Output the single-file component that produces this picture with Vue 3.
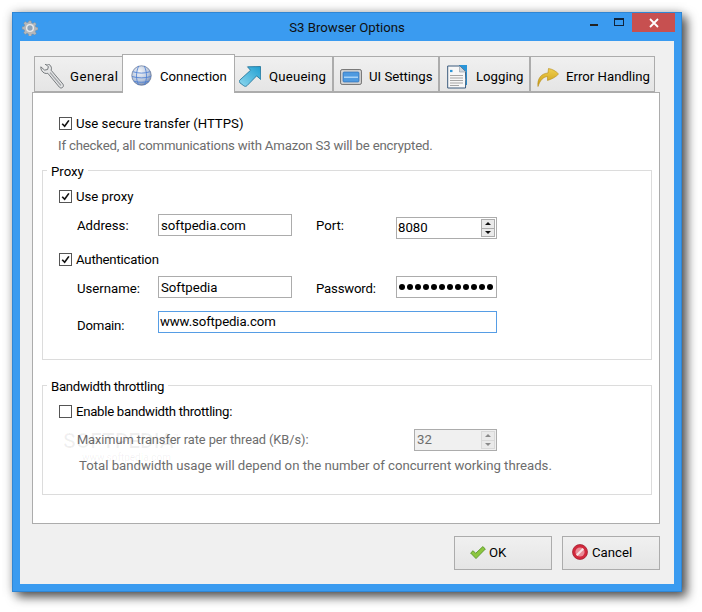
<script setup>
import { ref } from 'vue'

const tabs = [
  { id: 'general', label: 'General', width: 89, icon: 'wrench' },
  { id: 'connection', label: 'Connection', width: 113, icon: 'globe', active: true },
  { id: 'queueing', label: 'Queueing', width: 99, icon: 'arrow' },
  { id: 'ui', label: 'UI Settings', width: 106, icon: 'ui' },
  { id: 'logging', label: 'Logging', width: 91, icon: 'log' },
  { id: 'errors', label: 'Error Handling', width: 125, icon: 'curve' }
]
const secure = ref(true)
const proxy = ref(true)
const auth = ref(true)
const throttle = ref(false)
</script>

<template>
  <div class="screen">
    <div class="window">
      <header class="titlebar">
        <svg class="app-icon" viewBox="0 0 20 20">
          <path d="M8.500 .5h3l.5 2.600 1.700.7 2.200-1.400 2.100 2.100-1.400 2.200.7 1.700 2.600.5v3l-2.600.5-.7 1.700 1.400 2.200-2.100 2.100-2.200-1.400-1.700.7-.5 2.600h-3L8 16.900l-1.700-.7-2.200 1.400L2 15.500l1.400-2.200-.7-1.700L.1 11V8l2.600-.5.7-1.700L2 3.600 4.100 1.500l2.200 1.400L8 2.200z" transform="translate(0 .5)" fill="#b4b8bc" stroke="#7f868d" stroke-width=".5"/>
          <circle cx="10" cy="10" r="4.200" fill="#8fa3b8" stroke="#e8eaec" stroke-width="1.800"/>
        </svg>
        <div class="title">S3 Browser Options</div>
        <div class="controls">
          <span class="min"></span>
          <span class="max"></span>
          <span class="close">
            <svg viewBox="0 0 10 10" width="10" height="10"><path d="M1 1l8 8M9 1l-8 8" stroke="#fff" stroke-width="1.800"/></svg>
          </span>
        </div>
      </header>

      <main class="client">
        <nav class="tabstrip">
          <div
            v-for="t in tabs"
            :key="t.id"
            class="tab"
            :class="[{ active: t.active }, 'tab-' + t.id]"
            :style="{ width: t.width + 'px' }"
          >
            <svg v-if="t.icon === 'wrench'" class="ticon" viewBox="0 0 24 25">
              <path d="M.8 2.800l3.800 3.300 3-.6.800-2.900L5 0c2.800-.6 5.500.5 6.300 3.200.3 1.100.2 2.100-.2 3L22.800 20c.9 1.100.8 2.500-.2 3.400-1 .9-2.400.8-3.300-.3L7.800 9.300c-1 .3-2.100.3-3.100-.1C2.200 8.200.6 5.600.8 2.800z" fill="#e4e5e6" stroke="#6a6e72" stroke-width=".9"/>
              <path d="M10 8.500l11 13" stroke="#a4a7aa" stroke-width="1.200"/>
            </svg>
            <svg v-else-if="t.icon === 'globe'" class="ticon" viewBox="0 0 22 22">
              <defs>
                <radialGradient id="gl" cx=".4" cy=".3" r=".8">
                  <stop offset="0" stop-color="#f4f6f9"/><stop offset=".6" stop-color="#b8c6dc"/><stop offset="1" stop-color="#5f77a3"/>
                </radialGradient>
              </defs>
              <circle cx="11" cy="11" r="10.200" fill="url(#gl)" stroke="#5b6e8e" stroke-width=".7"/>
              <path d="M2 7c6 2 12 2 18 0M1 12c6 2 14 2 20 0M3 17c5 1.500 11 1.500 16 0M8 1C5 8 5 15 8 21M14 1c3 7 3 14 0 20" fill="none" stroke="#4d80d4" stroke-width=".9"/>
            </svg>
            <svg v-else-if="t.icon === 'arrow'" class="ticon" viewBox="0 0 22 21">
              <defs>
                <linearGradient id="ar" x1="0" y1="1" x2="1" y2="0">
                  <stop offset="0" stop-color="#8fd8ee"/><stop offset="1" stop-color="#1f9ed1"/>
                </linearGradient>
              </defs>
              <path d="M8.500 .8l13-.3.300 13-4.200-3.600-9.500 9.700c-1 1-2.200 1-3.400.1L1 16.900c-.9-1-.9-2.100 0-3L11.500 4.300z" fill="url(#ar)" stroke="#1a6f96" stroke-width=".8"/>
            </svg>
            <svg v-else-if="t.icon === 'ui'" class="ticon" viewBox="0 0 22 16">
              <rect x=".6" y=".6" width="20.800" height="14.800" rx="1.500" fill="#d8d8d8" stroke="#6e6e6e"/>
              <rect x="3" y="3" width="16" height="10" rx="1" fill="#4f9ae0" stroke="#2f6fb2" stroke-width=".7"/>
              <rect x="4" y="7.500" width="14" height="1.500" fill="#a7d2f6"/>
            </svg>
            <svg v-else-if="t.icon === 'log'" class="ticon" viewBox="0 0 20 24">
              <path d="M12 0h8v20h-3z" fill="#2a95d8"/>
              <path d="M.7 1h12l5.800 5.500c.4 5.600.4 11.200 0 16.500H.7z" fill="#f7f7f7" stroke="#3a5a7d"/>
              <path d="M12.500 1v6h6.300" fill="#cfd6dd" stroke="#8c99a6" stroke-width=".6"/>
              <path d="M3 6h2.500" stroke="#2a95d8" stroke-width="2.200"/>
              <path d="M3 10.500h13M3 13h13M3 15.500h13M3 18h13M3 20.500h9" stroke="#a5a5a5"/>
            </svg>
            <svg v-else class="ticon" viewBox="0 0 22 19">
              <defs>
                <linearGradient id="cv" x1="0" y1="0" x2="0" y2="1">
                  <stop offset="0" stop-color="#f0d050"/><stop offset="1" stop-color="#c99a10"/>
                </linearGradient>
              </defs>
              <path d="M1 18.500C0 11 4 5.500 11 5l.5-4.500C15 1 19 3 21.500 6c-2.500 3-6.500 5-11 6.500V8.500C6 9 3 12.500 1 18.500z" fill="url(#cv)" stroke="#b58a14" stroke-width=".6"/>
            </svg>
            <span class="tlabel">{{ t.label }}</span>
          </div>
        </nav>

        <section class="page">
          <label class="check first">
            <input v-model="secure" type="checkbox" class="native" />
            <span class="box"><svg v-if="secure" viewBox="0 0 13 13"><path d="M2.600 6.800l2.900 3 5-7" fill="none" stroke="#111" stroke-width="2"/></svg></span>
            Use secure transfer (HTTPS)
          </label>
          <p class="hint">If checked, all communications with Amazon S3 will be encrypted.</p>

          <div class="group proxy">
            <span class="legend">Proxy</span>
            <label class="check">
              <input v-model="proxy" type="checkbox" class="native" />
              <span class="box"><svg v-if="proxy" viewBox="0 0 13 13"><path d="M2.600 6.800l2.900 3 5-7" fill="none" stroke="#111" stroke-width="2"/></svg></span>
              Use proxy
            </label>
            <div class="row row-address">
              <span class="lbl">Address:</span>
              <div class="field w134">softpedia.com</div>
              <span class="lbl2">Port:</span>
              <div class="field w101 spin port">
                8080
                <span class="spinner"><i class="up"></i><i class="down"></i></span>
              </div>
            </div>
            <label class="check auth tight">
              <input v-model="auth" type="checkbox" class="native" />
              <span class="box"><svg v-if="auth" viewBox="0 0 13 13"><path d="M2.600 6.800l2.900 3 5-7" fill="none" stroke="#111" stroke-width="2"/></svg></span>
              Authentication
            </label>
            <div class="row row-user">
              <span class="lbl lower">Username:</span>
              <div class="field w134">Softpedia</div>
              <span class="lbl2 lower tight">Password:</span>
              <div class="field w101 dots"><i v-for="n in 12" :key="n"></i></div>
            </div>
            <div class="row row-domain">
              <span class="lbl lower3 tight">Domain:</span>
              <div class="field focus">www.softpedia.com</div>
            </div>
          </div>

          <div class="group band">
            <span class="legend tighter">Bandwidth throttling</span>
            <label class="check tighter">
              <input v-model="throttle" type="checkbox" class="native" />
              <span class="box"><svg v-if="throttle" viewBox="0 0 13 13"><path d="M2.600 6.800l2.900 3 5-7" fill="none" stroke="#111" stroke-width="2"/></svg></span>
              Enable bandwidth throttling:
            </label>
            <div class="row row-rate">
              <span class="lbl wide dim">Maximum transfer rate per thread (KB/s):</span>
              <div class="field w83 spin disabled">
                32
                <span class="spinner"><i class="up"></i><i class="down"></i></span>
              </div>
            </div>
            <p class="total dim">Total bandwidth usage will depend on the number of concurrent working threads.</p>
            <span class="mark">SOFTPEDIA<sup>™</sup></span>
            <span class="mark2">www.softpedia.com</span>
          </div>
        </section>

        <footer class="buttons">
          <button class="btn btn-ok" type="button">
            <svg viewBox="0 0 16 13" width="16" height="13"><path d="M.6 7l2.500-2.300 2.600 2.600L12.800.6 15.400 3 6 12.600z" fill="#8cc63f" stroke="#4f8f22" stroke-width=".8"/></svg>
            <span>OK</span>
          </button>
          <button class="btn btn-cancel" type="button">
            <svg viewBox="0 0 16 16" width="16" height="16"><circle cx="8" cy="8" r="7.500" fill="#d2283c" stroke="#9b1a2a" stroke-width=".7"/><circle cx="8" cy="8" r="4.600" fill="#e98c97"/><path d="M4.700 11.300l6.600-6.600" stroke="#f7e3e5" stroke-width="2"/></svg>
            <span>Cancel</span>
          </button>
        </footer>
      </main>
    </div>
  </div>
</template>

<style>
html, body { margin: 0; background: #fff; }
</style>

<style scoped>
.screen {
  box-sizing: border-box;
  width: 702px;
  height: 612px;
  padding: 12px 20px 20px 12px;
  overflow: hidden;
}
.window {
  box-sizing: border-box;
  width: 670px;
  height: 580px;
  background: #3a9bf0;
  border: 1px solid #2f86d4;
  padding: 0 7px 7px;
  display: flex;
  flex-direction: column;
  font: 13.2px Roboto, "Liberation Sans", sans-serif;
  color: #000;
  box-shadow: 5px 5px 10px rgba(0, 0, 0, .65), 0 0 10px rgba(0, 0, 0, .2);
}
.titlebar {
  height: 28px;
  flex: none;
  position: relative;
  display: flex;
  align-items: center;
  justify-content: center;
}
.app-icon { position: absolute; left: 2px; top: 7px; width: 16px; height: 16px; }
.title { color: #0f0f0f; }
.controls { position: absolute; right: 0; top: 0; }
.min { position: absolute; right: 76px; top: 11px; width: 8px; height: 2px; background: #222; }
.max { position: absolute; right: 50px; top: 5px; width: 8px; height: 5px; border: 1px solid #10233a; border-top-width: 2px; }
.close { position: absolute; right: -1px; top: 0; width: 43px; height: 19px; background: #c75050; display: flex; align-items: center; justify-content: center; }

.client {
  flex: 1;
  background: #f0f0f0;
  padding: 13px 14px 14px 12px;
  display: flex;
  flex-direction: column;
  min-height: 0;
}
.tabstrip { display: flex; align-items: flex-end; height: 38px; padding-left: 2px; flex: none; position: relative; z-index: 1; }
.tab {
  box-sizing: border-box;
  height: 36px;
  flex: none;
  border: 1px solid #acacac;
  background: linear-gradient(#f0f0f0, #e5e5e5);
  position: relative;
}
.tab.active { height: 39px; margin: 0 -1px -1px; background: #fff; border-bottom: 0; z-index: 2; }
.tlabel { position: absolute; top: 11px; white-space: nowrap; line-height: 18px; }
.ticon { position: absolute; display: block; }
.tab-general .ticon { left: 5px; top: 7px; width: 24px; height: 25px; }
.tab-general .tlabel { left: 35px; letter-spacing: .5px; }
.tab-connection .ticon { left: 8px; top: 10px; width: 21px; height: 21px; }
.tab-connection .tlabel { left: 37px; top: 13px; }
.tab-queueing .ticon { left: 4px; top: 9px; width: 22px; height: 21px; }
.tab-queueing .tlabel { left: 34px; letter-spacing: .2px; }
.tab-ui .ticon { left: 6px; top: 12px; width: 22px; height: 16px; }
.tab-ui .tlabel { left: 35px; }
.tab-logging .ticon { left: 7px; top: 8px; width: 20px; height: 24px; }
.tab-logging .tlabel { left: 36px; }
.tab-errors .ticon { left: 6px; top: 11px; width: 22px; height: 19px; }
.tab-errors .tlabel { left: 35px; }

.page {
  box-sizing: border-box;
  height: 432px;
  flex: none;
  background: #fff;
  border: 1px solid #acacac;
  padding: 0 7px 0 9px;
  position: relative;
}
.native { position: absolute; opacity: 0; width: 0; height: 0; margin: 0; }
.check { display: flex; align-items: center; height: 20px; gap: 4px; }
.check.first { margin: 20px 0 0 17px; }
.box {
  box-sizing: border-box;
  width: 13px;
  height: 13px;
  border: 1px solid #555;
  background: #fff;
  flex: none;
  display: block;
}
.box svg { display: block; width: 11px; height: 11px; }
.hint { margin: 3px 0 0 16px; height: 20px; line-height: 20px; color: #6d6d6d; letter-spacing: -.17px; }
.tight { letter-spacing: -.2px; }
.tighter { letter-spacing: -.28px; }

.group {
  box-sizing: border-box;
  border: 1px solid #dcdcdc;
  position: relative;
  padding: 15px 0 0 16px;
}
.proxy { height: 190px; margin-top: 14px; }
.band { height: 110px; margin-top: 25px; }
.legend {
  position: absolute;
  left: 4px;
  top: -9px;
  padding: 0 4px;
  background: #fff;
  line-height: 20px;
}
.row { display: flex; align-items: flex-start; padding-left: 18px; }
.row-address { margin-top: 8px; height: 25px; }
.auth { margin-top: 10px; }
.row-user { margin-top: 7px; height: 22px; }
.row-domain { margin-top: 13px; height: 22px; }
.row-rate { margin-top: 8px; height: 22px; }
.lbl { width: 81px; flex: none; line-height: 24px; }
.lbl.wide { width: 337px; line-height: 22px; font-size: 12.8px; letter-spacing: -.06px; }
.lbl2 { width: 80px; flex: none; margin-left: 24px; line-height: 24px; }
.lower { padding-top: 1px; }
.lower3 { padding-top: 3px; }
.field {
  box-sizing: border-box;
  height: 22px;
  border: 1px solid #acacac;
  background: #fff;
  line-height: 20px;
  padding-left: 2px;
  position: relative;
  flex: none;
}
.w134 { width: 134px; line-height: 22px; }
.w101 { width: 101px; }
.w83 { width: 83px; }
.port { margin-top: 3px; padding-left: 1px; }
.focus { width: 339px; border-color: #569de5; padding-left: 1px; letter-spacing: -.1px; }
.disabled { background: #f0f0f0; color: #6d6d6d; border-color: #acacac; }
.spinner {
  position: absolute;
  right: 1px;
  top: 1px;
  width: 14px;
  height: 18px;
  display: flex;
  flex-direction: column;
}
.spinner i {
  flex: 1;
  background: #eaeaea;
  border: 1px solid #acacac;
  position: relative;
  display: block;
}
.spinner i + i { margin-top: -1px; }
.spinner i::after {
  content: "";
  position: absolute;
  left: 3px;
  top: 2px;
  border: 3px solid transparent;
  border-top: 0;
  border-bottom: 3px solid #111;
}
.spinner i.down::after { border-bottom: 0; border-top: 3px solid #111; }
.disabled .spinner i { border-color: #d9d9d9; }
.disabled .spinner i::after { border-bottom-color: #8a8a8a; }
.disabled .spinner i.down::after { border-top-color: #8a8a8a; }
.dots { display: flex; align-items: center; gap: 2px; padding-left: 2px; }
.dots i { width: 6px; height: 6px; border-radius: 50%; background: #000; display: block; flex: none; }
.dim { color: #6d6d6d; }
.total { margin: 5px 0 0 20px; height: 20px; line-height: 20px; letter-spacing: -.01px; }
.mark, .mark2 { position: absolute; color: rgba(0, 0, 0, .06); pointer-events: none; white-space: nowrap; }
.mark { left: 20px; top: 39px; font-size: 21px; font-weight: 500; line-height: 26px; }
.mark sup { font-size: 8px; }
.mark2 { left: 39px; top: 66px; font-size: 10px; }

.buttons { display: flex; justify-content: flex-end; gap: 10px; margin-top: 12px; flex: none; }
.btn {
  box-sizing: border-box;
  width: 98px;
  height: 34px;
  border: 1px solid #acacac;
  background: linear-gradient(#f0f0f0, #e5e5e5);
  font: inherit;
  color: #000;
  display: flex;
  align-items: center;
  padding: 0 0 2px 9px;
  gap: 3px;
}
.btn-ok { padding-left: 15px; }
.btn-cancel span { margin-left: 1px; }
</style>
